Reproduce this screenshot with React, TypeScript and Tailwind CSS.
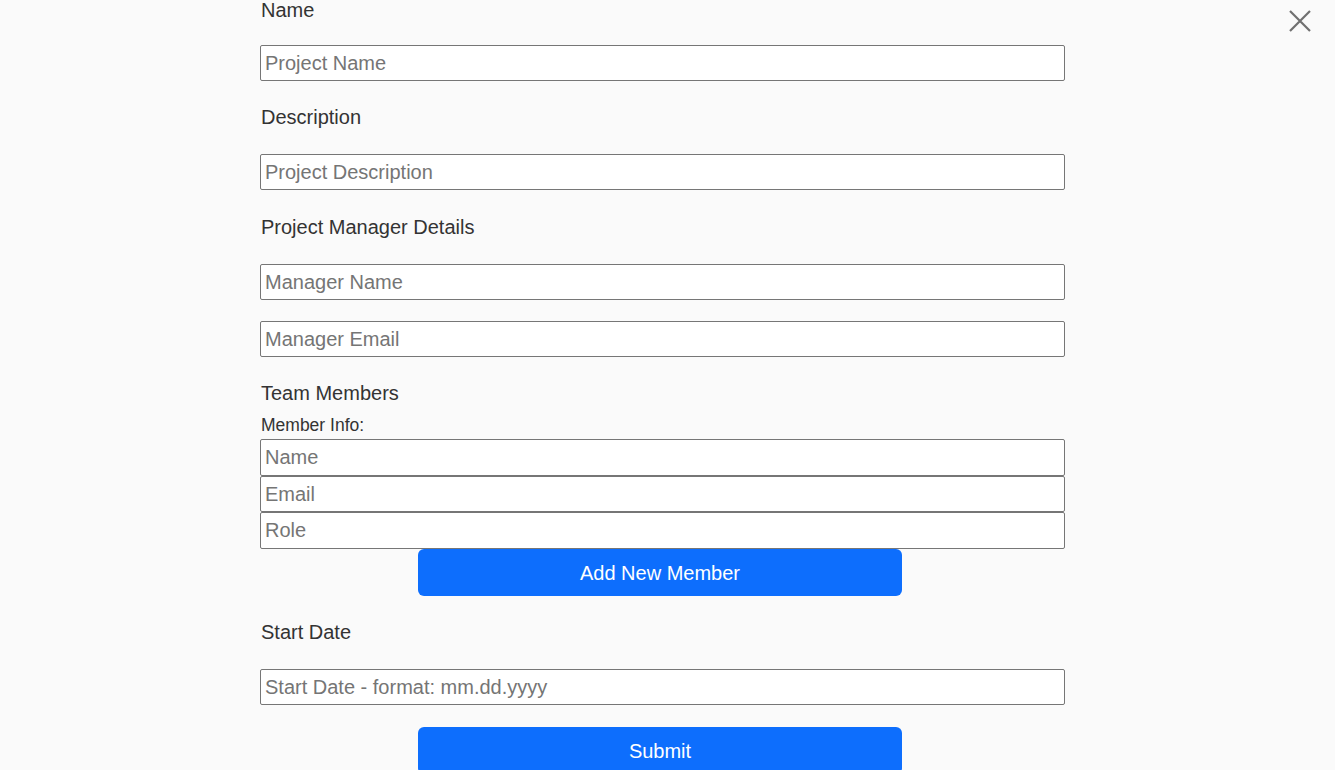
import React from "react";

const inputCls =
  "block w-full bg-white border border-[#767676] rounded-[2px] pl-[4px] text-[20px] text-[#222] placeholder:text-[#757575] outline-none";

const labelCls = "block pl-[1px] text-[20px] leading-[23px] text-[#333]";

export default function App() {
  return (
    <div
      className="relative w-[1335px] h-[770px] overflow-hidden bg-[#fafafa]"
      style={{ fontFamily: '"Liberation Sans", Arial, sans-serif' }}
    >
      <button className="absolute left-[1286px] top-[7px] w-[28px] h-[28px] flex items-center justify-center">
        <svg width="24" height="24" viewBox="0 0 24 24">
          <path d="M2 2 L22 22 M22 2 L2 22" stroke="#707070" strokeWidth="2.2" strokeLinecap="butt" />
        </svg>
      </button>

      <form className="flex flex-col ml-[260px] w-[805px] mt-[-1px]">
        <label className={labelCls}>Name</label>
        <input className={`${inputCls} h-[36px] mt-[23px]`} placeholder="Project Name" />

        <label className={`${labelCls} mt-[25px]`}>Description</label>
        <input className={`${inputCls} h-[36px] mt-[25px]`} placeholder="Project Description" />

        <label className={`${labelCls} mt-[26px]`}>Project Manager Details</label>
        <input className={`${inputCls} h-[36px] mt-[25px]`} placeholder="Manager Name" />
        <input className={`${inputCls} h-[36px] mt-[21px]`} placeholder="Manager Email" />

        <label className={`${labelCls} mt-[25px]`}>Team Members</label>
        <label className="block pl-[1px] text-[17.5px] leading-[20px] text-[#333] mt-[10px]">Member Info:</label>
        <input className={`${inputCls} h-[37px] mt-[4px]`} placeholder="Name" />
        <input className={`${inputCls} h-[36px]`} placeholder="Email" />
        <input className={`${inputCls} h-[37px]`} placeholder="Role" />
        <button
          type="button"
          className="ml-[158px] w-[484px] h-[47px] bg-[#0d6efd] text-white text-[20px] rounded-[6px]"
        >
          Add New Member
        </button>

        <label className={`${labelCls} mt-[25px]`}>Start Date</label>
        <input
          className={`${inputCls} h-[36px] mt-[25px]`}
          placeholder="Start Date - format: mm.dd.yyyy"
        />

        <button
          type="button"
          className="ml-[158px] mt-[22px] w-[484px] h-[47px] bg-[#0d6efd] text-white text-[20px] rounded-[6px]"
        >
          Submit
        </button>
      </form>
    </div>
  );
}
